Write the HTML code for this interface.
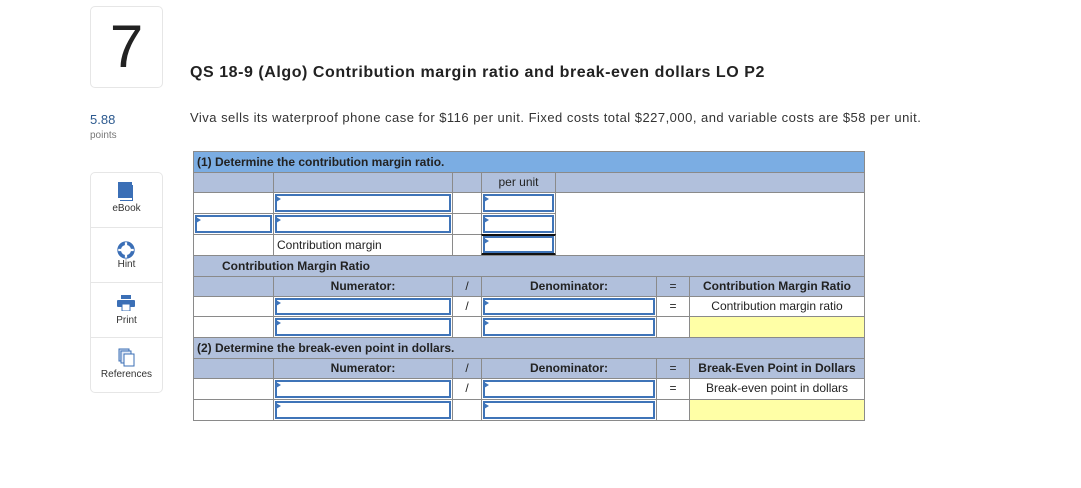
<!DOCTYPE html>
<html><head><meta charset="utf-8"><style>
body{margin:0;width:1081px;height:488px;background:#fff;position:relative;overflow:hidden;font-family:"Liberation Sans",Arial,sans-serif;color:#222}
.a{position:absolute}
.c{position:absolute;box-sizing:border-box;border:1px solid #8a8a8a;font-size:12px;line-height:18px;color:#222;white-space:nowrap}
.g{background:#b1c0dc}
.w{background:#fff}
.y{background:#ffffa6}
.b{font-weight:bold}
.ctr{text-align:center}
.i{position:absolute;left:1px;top:1px;right:1px;bottom:1px;border:2px solid #3f74b8;box-sizing:border-box;background:#fff}
.i:before{content:"";position:absolute;left:-1px;top:0;border-left:5px solid #3f74b8;border-top:3px solid transparent;border-bottom:3px solid transparent}
</style></head><body>
<div class="a" style="left:90px;top:6px;width:73px;height:82px;box-sizing:border-box;border:1px solid #e6e6e6;border-radius:5px;font-size:60px;line-height:80px;text-align:center;color:#222;font-weight:300">7</div>
<div class="a" style="left:90px;top:112px;font-size:13px;color:#2d5a8f">5.88</div>
<div class="a" style="left:90px;top:130px;font-size:10px;color:#777">points</div>

<div class="a" style="left:90px;top:172px;width:73px;height:221px;box-sizing:border-box;border:1px solid #e6e6e6;border-radius:5px"></div>
<div class="a" style="left:90px;top:227px;width:73px;height:1px;background:#e6e6e6"></div>
<div class="a" style="left:90px;top:282px;width:73px;height:1px;background:#e6e6e6"></div>
<div class="a" style="left:90px;top:337px;width:73px;height:1px;background:#e6e6e6"></div>
<svg class="a" style="left:117px;top:182px" width="18" height="20" viewBox="0 0 18 20"><rect x="1" y="0" width="14" height="16" fill="#3b6fb6"/><path d="M3 16v3h13V3h-1v13z" fill="#3b6fb6"/><rect x="3" y="16" width="12" height="2" fill="#fff"/></svg>
<div class="a" style="left:90px;top:203px;width:73px;text-align:center;font-size:10px;color:#333">eBook</div>
<svg class="a" style="left:117px;top:241px" width="18" height="18" viewBox="0 0 16 16"><circle cx="8" cy="8" r="6" fill="none" stroke="#3b6fb6" stroke-width="3"/><path d="M8 0v5M8 11v5M0 8h5M11 8h5" stroke="#fff" stroke-width="2"/><circle cx="8" cy="8" r="7.3" fill="none" stroke="#3b6fb6" stroke-width=".8"/></svg>
<div class="a" style="left:90px;top:259px;width:73px;text-align:center;font-size:10px;color:#333">Hint</div>
<svg class="a" style="left:117px;top:295px" width="18" height="16" viewBox="0 0 18 16"><rect x="4" y="0" width="10" height="4" fill="#3b6fb6"/><rect x="0" y="5" width="18" height="7" rx="1" fill="#3b6fb6"/><rect x="5" y="9" width="8" height="7" fill="#fff" stroke="#3b6fb6"/></svg>
<div class="a" style="left:90px;top:315px;width:73px;text-align:center;font-size:10px;color:#333">Print</div>
<svg class="a" style="left:118px;top:348px" width="17" height="19" viewBox="0 0 17 19"><rect x="1" y="1" width="10" height="12" fill="#cfdbee" stroke="#3b6fb6"/><rect x="3" y="3" width="10" height="12" fill="#e3eaf6" stroke="#3b6fb6"/><rect x="6" y="6" width="10" height="12" fill="#fff" stroke="#3b6fb6"/></svg>
<div class="a" style="left:90px;top:369px;width:73px;text-align:center;font-size:10px;color:#333">References</div>

<div class="a b" style="left:190px;top:64px;font-size:16px;color:#222;letter-spacing:0.55px">QS 18-9 (Algo) Contribution margin ratio and break-even dollars LO P2</div>
<div class="a" style="left:190px;top:110px;font-size:13px;color:#333;letter-spacing:0.48px">Viva sells its waterproof phone case for $116 per unit. Fixed costs total $227,000, and variable costs are $58 per unit.</div>

<div class="c b" style="left:193px;top:151px;width:672px;height:22px;background:#7badE3;padding-left:3px;line-height:20px">(1) Determine the contribution margin ratio.</div>
<div class="c g" style="left:193px;top:172px;width:81px;height:21px"></div>
<div class="c g" style="left:273px;top:172px;width:180px;height:21px"></div>
<div class="c g" style="left:452px;top:172px;width:30px;height:21px"></div>
<div class="c g ctr" style="left:481px;top:172px;width:75px;height:21px">per unit</div>
<div class="c g" style="left:555px;top:172px;width:310px;height:21px"></div>

<div class="c w" style="left:193px;top:192px;width:81px;height:22px"></div>
<div class="c w" style="left:273px;top:192px;width:180px;height:22px"><div class="i"></div></div>
<div class="c w" style="left:452px;top:192px;width:30px;height:22px"></div>
<div class="c w" style="left:481px;top:192px;width:75px;height:22px"><div class="i"></div></div>
<div class="c w" style="left:555px;top:192px;width:310px;height:64px"></div>

<div class="c w" style="left:193px;top:213px;width:81px;height:22px"><div class="i"></div></div>
<div class="c w" style="left:273px;top:213px;width:180px;height:22px"><div class="i"></div></div>
<div class="c w" style="left:452px;top:213px;width:30px;height:22px"></div>
<div class="c w" style="left:481px;top:213px;width:75px;height:22px"><div class="i"></div></div>

<div class="c w" style="left:193px;top:234px;width:81px;height:22px"></div>
<div class="c w" style="left:273px;top:234px;width:180px;height:22px;padding-left:3px;line-height:20px">Contribution margin</div>
<div class="c w" style="left:452px;top:234px;width:30px;height:22px"></div>
<div class="c w" style="left:481px;top:234px;width:75px;height:22px;border-top:2px solid #111;border-bottom:3px solid #111"><div class="i" style="top:0;bottom:0"></div></div>

<div class="c g b" style="left:193px;top:255px;width:672px;height:22px;padding-left:28px;line-height:20px">Contribution Margin Ratio</div>

<div class="c g" style="left:193px;top:276px;width:81px;height:21px"></div>
<div class="c g b ctr" style="left:273px;top:276px;width:180px;height:21px">Numerator:</div>
<div class="c g ctr" style="left:452px;top:276px;width:30px;height:21px">/</div>
<div class="c g b ctr" style="left:481px;top:276px;width:176px;height:21px">Denominator:</div>
<div class="c g ctr" style="left:656px;top:276px;width:34px;height:21px">=</div>
<div class="c g b ctr" style="left:689px;top:276px;width:176px;height:21px">Contribution Margin Ratio</div>

<div class="c w" style="left:193px;top:296px;width:81px;height:21px"></div>
<div class="c w" style="left:273px;top:296px;width:180px;height:21px"><div class="i"></div></div>
<div class="c w ctr" style="left:452px;top:296px;width:30px;height:21px">/</div>
<div class="c w" style="left:481px;top:296px;width:176px;height:21px"><div class="i"></div></div>
<div class="c w ctr" style="left:656px;top:296px;width:34px;height:21px">=</div>
<div class="c w ctr" style="left:689px;top:296px;width:176px;height:21px">Contribution margin ratio</div>

<div class="c w" style="left:193px;top:316px;width:81px;height:22px"></div>
<div class="c w" style="left:273px;top:316px;width:180px;height:22px"><div class="i"></div></div>
<div class="c w" style="left:452px;top:316px;width:30px;height:22px"></div>
<div class="c w" style="left:481px;top:316px;width:176px;height:22px"><div class="i"></div></div>
<div class="c w" style="left:656px;top:316px;width:34px;height:22px"></div>
<div class="c y" style="left:689px;top:316px;width:176px;height:22px"></div>

<div class="c g b" style="left:193px;top:337px;width:672px;height:22px;padding-left:3px;line-height:20px">(2) Determine the break-even point in dollars.</div>

<div class="c g" style="left:193px;top:358px;width:81px;height:21px"></div>
<div class="c g b ctr" style="left:273px;top:358px;width:180px;height:21px">Numerator:</div>
<div class="c g ctr" style="left:452px;top:358px;width:30px;height:21px">/</div>
<div class="c g b ctr" style="left:481px;top:358px;width:176px;height:21px">Denominator:</div>
<div class="c g ctr" style="left:656px;top:358px;width:34px;height:21px">=</div>
<div class="c g b ctr" style="left:689px;top:358px;width:176px;height:21px">Break-Even Point in Dollars</div>

<div class="c w" style="left:193px;top:378px;width:81px;height:22px"></div>
<div class="c w" style="left:273px;top:378px;width:180px;height:22px"><div class="i"></div></div>
<div class="c w ctr" style="left:452px;top:378px;width:30px;height:22px">/</div>
<div class="c w" style="left:481px;top:378px;width:176px;height:22px"><div class="i"></div></div>
<div class="c w ctr" style="left:656px;top:378px;width:34px;height:22px">=</div>
<div class="c w ctr" style="left:689px;top:378px;width:176px;height:22px">Break-even point in dollars</div>

<div class="c w" style="left:193px;top:399px;width:81px;height:22px"></div>
<div class="c w" style="left:273px;top:399px;width:180px;height:22px"><div class="i"></div></div>
<div class="c w" style="left:452px;top:399px;width:30px;height:22px"></div>
<div class="c w" style="left:481px;top:399px;width:176px;height:22px"><div class="i"></div></div>
<div class="c w" style="left:656px;top:399px;width:34px;height:22px"></div>
<div class="c y" style="left:689px;top:399px;width:176px;height:22px"></div>
</body></html>
